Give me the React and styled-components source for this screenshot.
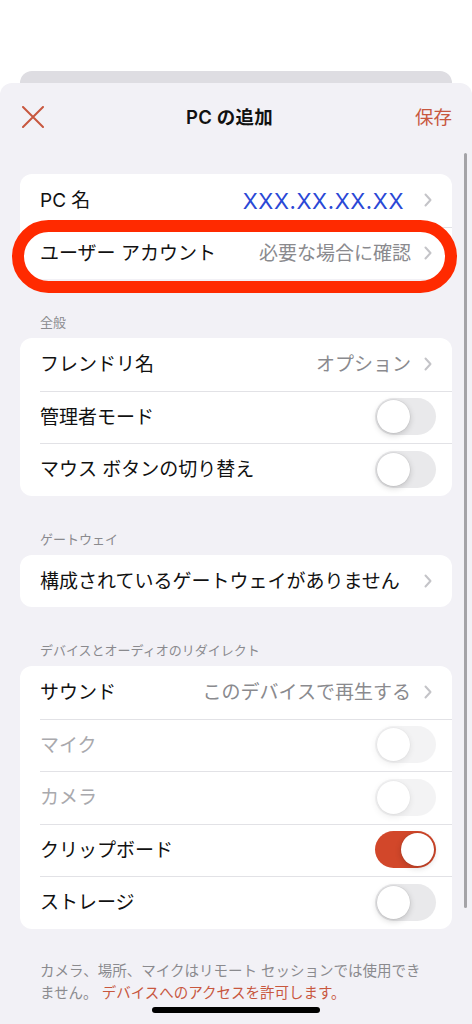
import React from 'react';
import styled, { createGlobalStyle } from 'styled-components';

const colors = {
  page: '#ffffff',
  sheet: '#f2f1f6',
  peek: '#dedde2',
  card: '#ffffff',
  text: '#111111',
  muted: '#8a8a8e',
  dim: '#a9a9ad',
  accent: '#c8573e',
  blue: '#2a48d6',
  line: '#e2e2e6',
  chevron: '#c4c4c8',
  toggleOff: '#e9e9eb',
  toggleOn: '#d2472a',
  highlight: '#ff2a00',
};

const GlobalStyle = createGlobalStyle`
  html, body {
    margin: 0;
    padding: 0;
    background: ${colors.page};
  }
  body {
    font-family: "Inter", "Noto Sans CJK JP", sans-serif;
    -webkit-font-smoothing: antialiased;
  }
`;

const Screen = styled.div`
  width: 472px;
  height: 1024px;
  overflow: hidden;
  position: relative;
  display: flex;
  flex-direction: column;
  background: ${colors.page};
`;

const TopGap = styled.div`
  height: 71px;
  flex: none;
`;

const PeekCard = styled.div`
  height: 12px;
  margin: 0 20px;
  background: ${colors.peek};
  border-radius: 12px 12px 0 0;
  flex: none;
`;

const Sheet = styled.div`
  flex: 1;
  background: ${colors.sheet};
  border-radius: 12px 12px 0 0;
  padding: 0 20px;
  position: relative;
`;

const NavBar = styled.div`
  height: 68px;
  display: flex;
  align-items: center;
  justify-content: space-between;
`;

const CloseButton = styled.button`
  border: none;
  background: none;
  padding: 0;
  margin-left: 2px;
  width: 22px;
  height: 22px;
  display: flex;
  align-items: center;
  justify-content: center;
  cursor: pointer;
`;

const Title = styled.div`
  font-size: 18.5px;
  font-weight: 600;
  color: ${colors.text};
  letter-spacing: 0.2px;
  margin-top: -2px;
`;

const SaveButton = styled.button`
  border: none;
  background: none;
  padding: 0;
  font-family: inherit;
  font-size: 18.5px;
  color: ${colors.accent};
  cursor: pointer;
  margin-top: -2px;
`;

const Content = styled.div`
  padding-top: 23px;
`;

const Group = styled.div`
  margin-top: ${p => (p.$first ? 0 : 35)}px;
`;

const GroupHeader = styled.div`
  font-size: 13px;
  line-height: 16px;
  height: 16px;
  color: ${colors.muted};
  padding-left: 20px;
  margin-bottom: 8px;
`;

const Card = styled.div`
  background: ${colors.card};
  border-radius: 12px;
`;

const Row = styled.div`
  height: 52.5px;
  box-sizing: border-box;
  padding: 0 16px 0 20px;
  display: flex;
  align-items: center;
  position: relative;
  & + &::before {
    content: '';
    position: absolute;
    top: 0;
    left: 20px;
    right: 0;
    height: 1px;
    background: ${colors.line};
  }
`;

const Label = styled.div`
  font-size: 19px;
  line-height: 24px;
  margin-top: 2px;
  color: ${p => (p.$disabled ? colors.dim : colors.text)};
  flex: 1;
  white-space: nowrap;
`;

const Value = styled.div`
  font-size: ${p => (p.$blue ? 22 : 19)}px;
  line-height: 24px;
  margin-top: 2px;
  color: ${p => (p.$blue ? colors.blue : colors.muted)};
  letter-spacing: ${p => (p.$blue ? '0.6px' : '0')};
  white-space: nowrap;
  margin-right: ${p => (p.$blue ? 20 : 13)}px;
`;

const ChevronWrap = styled.div`
  width: 8px;
  height: 14px;
  margin-right: 4px;
  display: flex;
`;

const Track = styled.div`
  width: 61px;
  height: 37px;
  border-radius: 19px;
  box-sizing: border-box;
  padding: 2px;
  display: flex;
  justify-content: ${p => (p.$on ? 'flex-end' : 'flex-start')};
  background: ${p => (p.$on ? colors.toggleOn : colors.toggleOff)};
  opacity: ${p => (p.$disabled ? 0.5 : 1)};
  flex: none;
`;

const Knob = styled.div`
  width: 33px;
  height: 33px;
  border-radius: 50%;
  background: #fff;
  box-shadow: 0 2px 6px rgba(0, 0, 0, 0.18), 0 0 0 0.5px rgba(0, 0, 0, 0.08);
`;

const Highlight = styled.div`
  position: absolute;
  top: -7px;
  bottom: -14px;
  left: -8px;
  right: -5px;
  border: 12px solid ${colors.highlight};
  border-radius: 40px;
  pointer-events: none;
`;

const Footer = styled.p`
  margin: 0;
  padding: 31px 20px 0 20px;
  font-size: 14.5px;
  line-height: 22px;
  color: ${colors.muted};
`;

const FooterLink = styled.span`
  color: ${colors.accent};
`;

const ScrollIndicator = styled.div`
  position: absolute;
  top: 70px;
  right: 5px;
  width: 3px;
  height: 755px;
  border-radius: 2px;
  background: rgba(0, 0, 0, 0.32);
`;

const HomeIndicator = styled.div`
  position: absolute;
  left: 152px;
  bottom: 11px;
  width: 168px;
  height: 6px;
  border-radius: 3px;
  background: #000;
`;

const CloseIcon = () => (
  <svg width="22" height="22" viewBox="0 0 22 22" fill="none">
    <path d="M1 1 L21 21 M21 1 L1 21" stroke={colors.accent} strokeWidth="2" strokeLinecap="round" />
  </svg>
);

const Chevron = () => (
  <ChevronWrap>
    <svg width="8" height="14" viewBox="0 0 8 14" fill="none">
      <path d="M1.5 1.5 L6.5 7 L1.5 12.5" stroke={colors.chevron} strokeWidth="2" strokeLinecap="round" strokeLinejoin="round" />
    </svg>
  </ChevronWrap>
);

const Toggle = ({ on, disabled }) => (
  <Track $on={on} $disabled={disabled}>
    <Knob />
  </Track>
);

const LinkRow = ({ label, value, blue, children }) => (
  <Row>
    <Label>{label}</Label>
    {value && <Value $blue={blue}>{value}</Value>}
    <Chevron />
    {children}
  </Row>
);

const ToggleRow = ({ label, on, disabled }) => (
  <Row>
    <Label $disabled={disabled}>{label}</Label>
    <Toggle on={on} disabled={disabled} />
  </Row>
);

export default function App() {
  return (
    <>
      <GlobalStyle />
      <Screen>
        <TopGap />
        <PeekCard />
        <Sheet>
          <NavBar>
            <CloseButton aria-label="閉じる">
              <CloseIcon />
            </CloseButton>
            <Title>PC の追加</Title>
            <SaveButton>保存</SaveButton>
          </NavBar>

          <Content>
            <Group $first>
              <Card>
                <LinkRow label="PC 名" value="XXX.XX.XX.XX" blue />
                <LinkRow label="ユーザー アカウント" value="必要な場合に確認">
                  <Highlight />
                </LinkRow>
              </Card>
            </Group>

            <Group>
              <GroupHeader>全般</GroupHeader>
              <Card>
                <LinkRow label="フレンドリ名" value="オプション" />
                <ToggleRow label="管理者モード" />
                <ToggleRow label="マウス ボタンの切り替え" />
              </Card>
            </Group>

            <Group>
              <GroupHeader>ゲートウェイ</GroupHeader>
              <Card>
                <LinkRow label="構成されているゲートウェイがありません" />
              </Card>
            </Group>

            <Group>
              <GroupHeader>デバイスとオーディオのリダイレクト</GroupHeader>
              <Card>
                <LinkRow label="サウンド" value="このデバイスで再生する" />
                <ToggleRow label="マイク" disabled />
                <ToggleRow label="カメラ" disabled />
                <ToggleRow label="クリップボード" on />
                <ToggleRow label="ストレージ" />
              </Card>
            </Group>

            <Footer>
              カメラ、場所、マイクはリモート セッションでは使用できません。 <FooterLink>デバイスへのアクセスを許可します。</FooterLink>
            </Footer>
          </Content>

          <ScrollIndicator />
        </Sheet>
        <HomeIndicator />
      </Screen>
    </>
  );
}
